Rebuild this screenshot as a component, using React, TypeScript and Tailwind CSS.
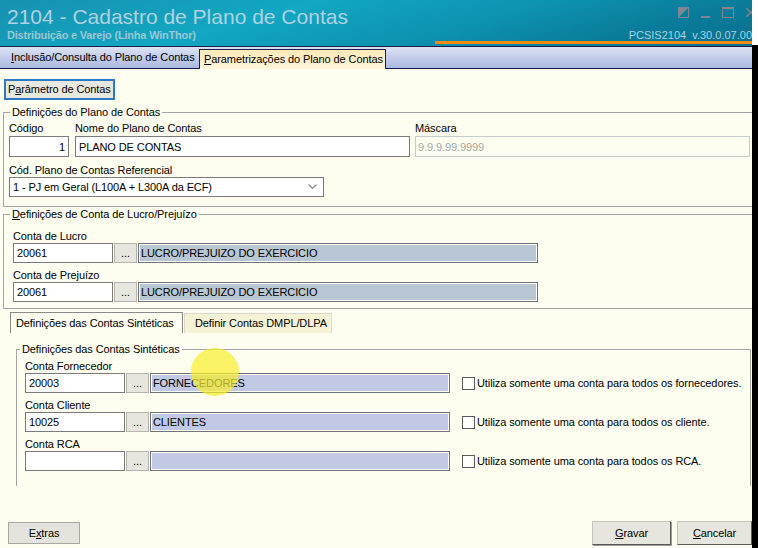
import type { ReactNode } from 'react'

const PAGE_BG = 'bg-[#fdfdf0]'

function Label({ children }: { children: ReactNode }) {
  return <div className="h-[14px] leading-[14px] whitespace-nowrap">{children}</div>
}

function TextBox({
  value,
  className = '',
}: {
  value: string
  className?: string
}) {
  return (
    <input
      readOnly
      value={value}
      className={`h-[20px] border border-[#7b7b7b] bg-white px-[3px] text-[11px] tracking-[-0.1px] text-black outline-none ${className}`}
    />
  )
}

function DotsButton() {
  return (
    <button className="h-[20px] w-[23px] border border-[#b4b4ac] bg-[#e6e6de] text-[11px] leading-[16px] text-black">
      ...
    </button>
  )
}

// linha de conta: código + botão de busca + descrição
function ContaRow({
  codigo,
  descricao,
  descW,
  fill,
}: {
  codigo: string
  descricao: string
  descW: string
  fill: string
}) {
  return (
    <div className="flex items-center gap-[1px]">
      <TextBox value={codigo} className="w-[100px]" />
      <DotsButton />
      <div className={`h-[20px] ${descW} border border-[#6e747a] p-[1px]`}>
        <div className={`h-full ${fill} pl-[1px] leading-[16px] whitespace-nowrap`}>{descricao}</div>
      </div>
    </div>
  )
}

function CheckLine({ text }: { text: string }) {
  return (
    <label className="ml-[12px] flex items-center gap-[2px] whitespace-nowrap">
      <span className="h-[13px] w-[13px] border border-[#5a5a5a] bg-white" />
      <span>{text}</span>
    </label>
  )
}

function WindowControls() {
  return (
    <div className="absolute right-0 top-[7px] flex items-start gap-[12px] opacity-70">
      <svg width="11" height="11" viewBox="0 0 11 11">
        <rect x="0.5" y="0.5" width="10" height="10" fill="none" stroke="#b08a8a" />
        <path d="M1 10 L10 1 L1 1 Z" fill="#b08a8a" />
      </svg>
      <svg width="9" height="11" viewBox="0 0 9 11">
        <rect x="0" y="9" width="9" height="2" fill="#b08a8a" />
      </svg>
      <svg width="12" height="11" viewBox="0 0 12 11">
        <rect x="0.5" y="0.5" width="11" height="10" fill="none" stroke="#b08a8a" />
        <rect x="0" y="0" width="12" height="2" fill="#b08a8a" />
      </svg>
      <svg width="6" height="11" viewBox="0 0 6 11">
        <path d="M0 1 L10 10 M10 1 L0 10" stroke="#b08a8a" strokeWidth="1.5" />
      </svg>
    </div>
  )
}

export default function App() {
  return (
    <div className="flex h-[548px] w-[758px] overflow-hidden font-['Liberation_Sans',Arial,sans-serif] text-[11px] tracking-[-0.1px] text-black">
      <div className={`flex w-[752px] flex-col ${PAGE_BG}`}>
        {/* barra de título */}
        <div className="relative h-[46px] bg-[linear-gradient(165deg,#1791b0_0%,#12a7c2_35%,#0d93b0_60%,#0a7d9c_80%,#0a6f8e_100%)]">
          <div className="pl-[7px] pt-[4px] text-[21px] leading-[25px] tracking-normal text-[#aed2e2]">
            2104 - Cadastro de Plano de Contas
          </div>
          <div className="flex items-center justify-between pl-[7px]">
            <span className="text-[11px] font-bold leading-[13px] tracking-[-0.2px] text-[#9cc6d6]">
              Distribuição e Varejo (Linha WinThor)
            </span>
            <span className="whitespace-pre text-[11px] leading-[13px] tracking-normal text-[#a8d2e2]">PCSIS2104  v.30.0.07.00</span>
          </div>
          <WindowControls />
          <div className="absolute bottom-[2px] left-[435px] right-0 h-[3px] bg-[#f08c12]" />
        </div>

        {/* abas principais */}
        <div className="flex h-[23px] items-end border-t border-[#1c1c4e] bg-[linear-gradient(#dbe2f2,#a9b7e0)]">
          <div className="flex h-full w-[199px] items-center border-b border-[#1c1c4e] pl-[11px] whitespace-nowrap">
            <span>
              <u>I</u>nclusão/Consulta do Plano de Contas
            </span>
          </div>
          <div className="flex h-[20px] w-[187px] items-center border border-b-0 border-[#1c1c4e] bg-[linear-gradient(#ffe9b8,#fff6dc)] pl-[4px] whitespace-nowrap">
            <span>
              <u>P</u>arametrizações do Plano de Contas
            </span>
          </div>
          <div className="h-full flex-1 border-b border-[#1c1c4e]" />
        </div>

        {/* conteúdo */}
        <div className="relative flex flex-1 flex-col">
          <button className="ml-[4px] mt-[10px] h-[21px] w-[111px] border-2 border-[#2a78c6] bg-[#e8e8e0] pl-[2px] text-left leading-[15px]">
            P<u>a</u>râmetro de Contas
          </button>

          {/* Definições do Plano de Contas */}
          <fieldset className="ml-[3px] mt-[6px] border-b border-l border-t border-[#a4a4a4] p-0">
            <legend className="ml-[6px] px-[2px] leading-[13px]">Definições do Plano de Contas</legend>
            <div className="pb-[9px] pl-[5px]">
              <div className="mt-[2px] flex gap-[6px]">
                <div className="w-[60px]">
                  <Label>Código</Label>
                  <TextBox value="1" className="mt-[1px] h-[21px] w-[60px] text-right" />
                </div>
                <div className="w-[335px]">
                  <Label>Nome do Plano de Contas</Label>
                  <TextBox value="PLANO DE CONTAS" className="mt-[1px] h-[21px] w-[335px]" />
                </div>
                <div className="ml-[-1px] w-[335px]">
                  <Label>Máscara</Label>
                  <input
                    readOnly
                    value="9.9.9.99.9999"
                    className="mt-[1px] h-[21px] w-[335px] border border-[#c4cccc] bg-transparent px-[2px] text-[11px] text-[#a6a6a6] outline-none"
                  />
                </div>
              </div>
              <div className="mt-[6px]">
                <Label>Cód. Plano de Contas Referencial</Label>
                <div className="flex h-[20px] w-[315px] items-center justify-between border border-[#7b7b7b] bg-white pl-[3px] pr-[6px]">
                  <span>1 - PJ em Geral (L100A + L300A da ECF)</span>
                  <svg width="9" height="6" viewBox="0 0 9 6">
                    <path d="M0.5 0.5 L4.5 4.5 L8.5 0.5" fill="none" stroke="#8a8a8a" strokeWidth="1.2" />
                  </svg>
                </div>
              </div>
            </div>
          </fieldset>

          {/* Definições de Conta de Lucro/Prejuízo */}
          <fieldset className="ml-[3px] mt-[1px] border-b border-l border-t border-[#a4a4a4] p-0">
            <legend className="ml-[6px] px-[2px] leading-[13px]">
              <u>D</u>efinições de Conta de Lucro/Prejuízo
            </legend>
            <div className="pb-[6px] pl-[9px]">
              <div className="mt-[8px]">
                <Label>Conta de Lucro</Label>
                <ContaRow codigo="20061" descricao="LUCRO/PREJUIZO DO EXERCICIO" descW="w-[400px]" fill="bg-[#b8c7d3]" />
              </div>
              <div className="mt-[5px]">
                <Label>Conta de Prejuízo</Label>
                <ContaRow codigo="20061" descricao="LUCRO/PREJUIZO DO EXERCICIO" descW="w-[400px]" fill="bg-[#b8c7d3]" />
              </div>
            </div>
          </fieldset>

          {/* abas internas */}
          <div className="ml-[10px] mt-[3px] flex items-end gap-[1px]">
            <div className="flex h-[21px] w-[173px] items-center border border-b-0 border-[#8a8a8a] pl-[5px] whitespace-nowrap">
              Definições das Contas Sintéticas
            </div>
            <div className="flex h-[20px] w-[148px] items-center border border-b-0 border-[#d8d8cc] bg-[#f6f2d6] pl-[10px] whitespace-nowrap">
              Definir Contas DMPL/DLPA
            </div>
          </div>

          {/* Definições das Contas Sintéticas */}
          <fieldset className="ml-[16px] mr-[1px] mt-[10px] border-l border-r border-t border-[#a4a4a4] p-0">
            <legend className="ml-[3px] px-[2px] leading-[13px]">Definições das Contas Sintéticas</legend>
            <div className="pb-[15px] pl-[8px]">
              <div className="mt-[3px]">
                <Label>Conta Fornecedor</Label>
                <div className="flex items-center">
                  <ContaRow codigo="20003" descricao="FORNECEDORES" descW="w-[300px]" fill="bg-[#c2c9e4]" />
                  <CheckLine text="Utiliza somente uma conta para todos os fornecedores." />
                </div>
              </div>
              <div className="mt-[5px]">
                <Label>Conta Cliente</Label>
                <div className="flex items-center">
                  <ContaRow codigo="10025" descricao="CLIENTES" descW="w-[300px]" fill="bg-[#c2c9e4]" />
                  <CheckLine text="Utiliza somente uma conta para todos os cliente." />
                </div>
              </div>
              <div className="mt-[5px]">
                <Label>Conta RCA</Label>
                <div className="flex items-center">
                  <ContaRow codigo="" descricao="" descW="w-[300px]" fill="bg-[#c2c9e4]" />
                  <CheckLine text="Utiliza somente uma conta para todos os RCA." />
                </div>
              </div>
            </div>
          </fieldset>

          <div className="flex-1" />

          {/* rodapé */}
          <div className="mb-[3px] flex h-[24px] items-center">
            <button className="ml-[8px] h-[22px] w-[72px] border border-[#a8a8a0] bg-[#e4e4dc]">
              E<u>x</u>tras
            </button>
            <div className="flex-1" />
            <button className="h-[24px] w-[79px] border border-[#c4c4bc] border-b-[#5a5a5a] border-r-[#5a5a5a] bg-[#e6e6de] shadow-[1px_1px_0_#9a9a9a]">
              <u>G</u>ravar
            </button>
            <button className="ml-[6px] h-[24px] w-[75px] border border-[#c4c4bc] border-b-[#5a5a5a] border-r-[#5a5a5a] bg-[#e6e6de]">
              <u>C</u>ancelar
            </button>
          </div>

          {/* destaque do cursor */}
          <div className="pointer-events-none absolute left-[191px] top-[279px] h-[48px] w-[48px] rounded-full bg-[#f6ee2a]/70" />
        </div>
      </div>
      <div className="flex w-[6px] flex-col">
        <div className="h-[45px] bg-white" />
        <div className="flex-1 bg-black" />
      </div>
    </div>
  )
}
